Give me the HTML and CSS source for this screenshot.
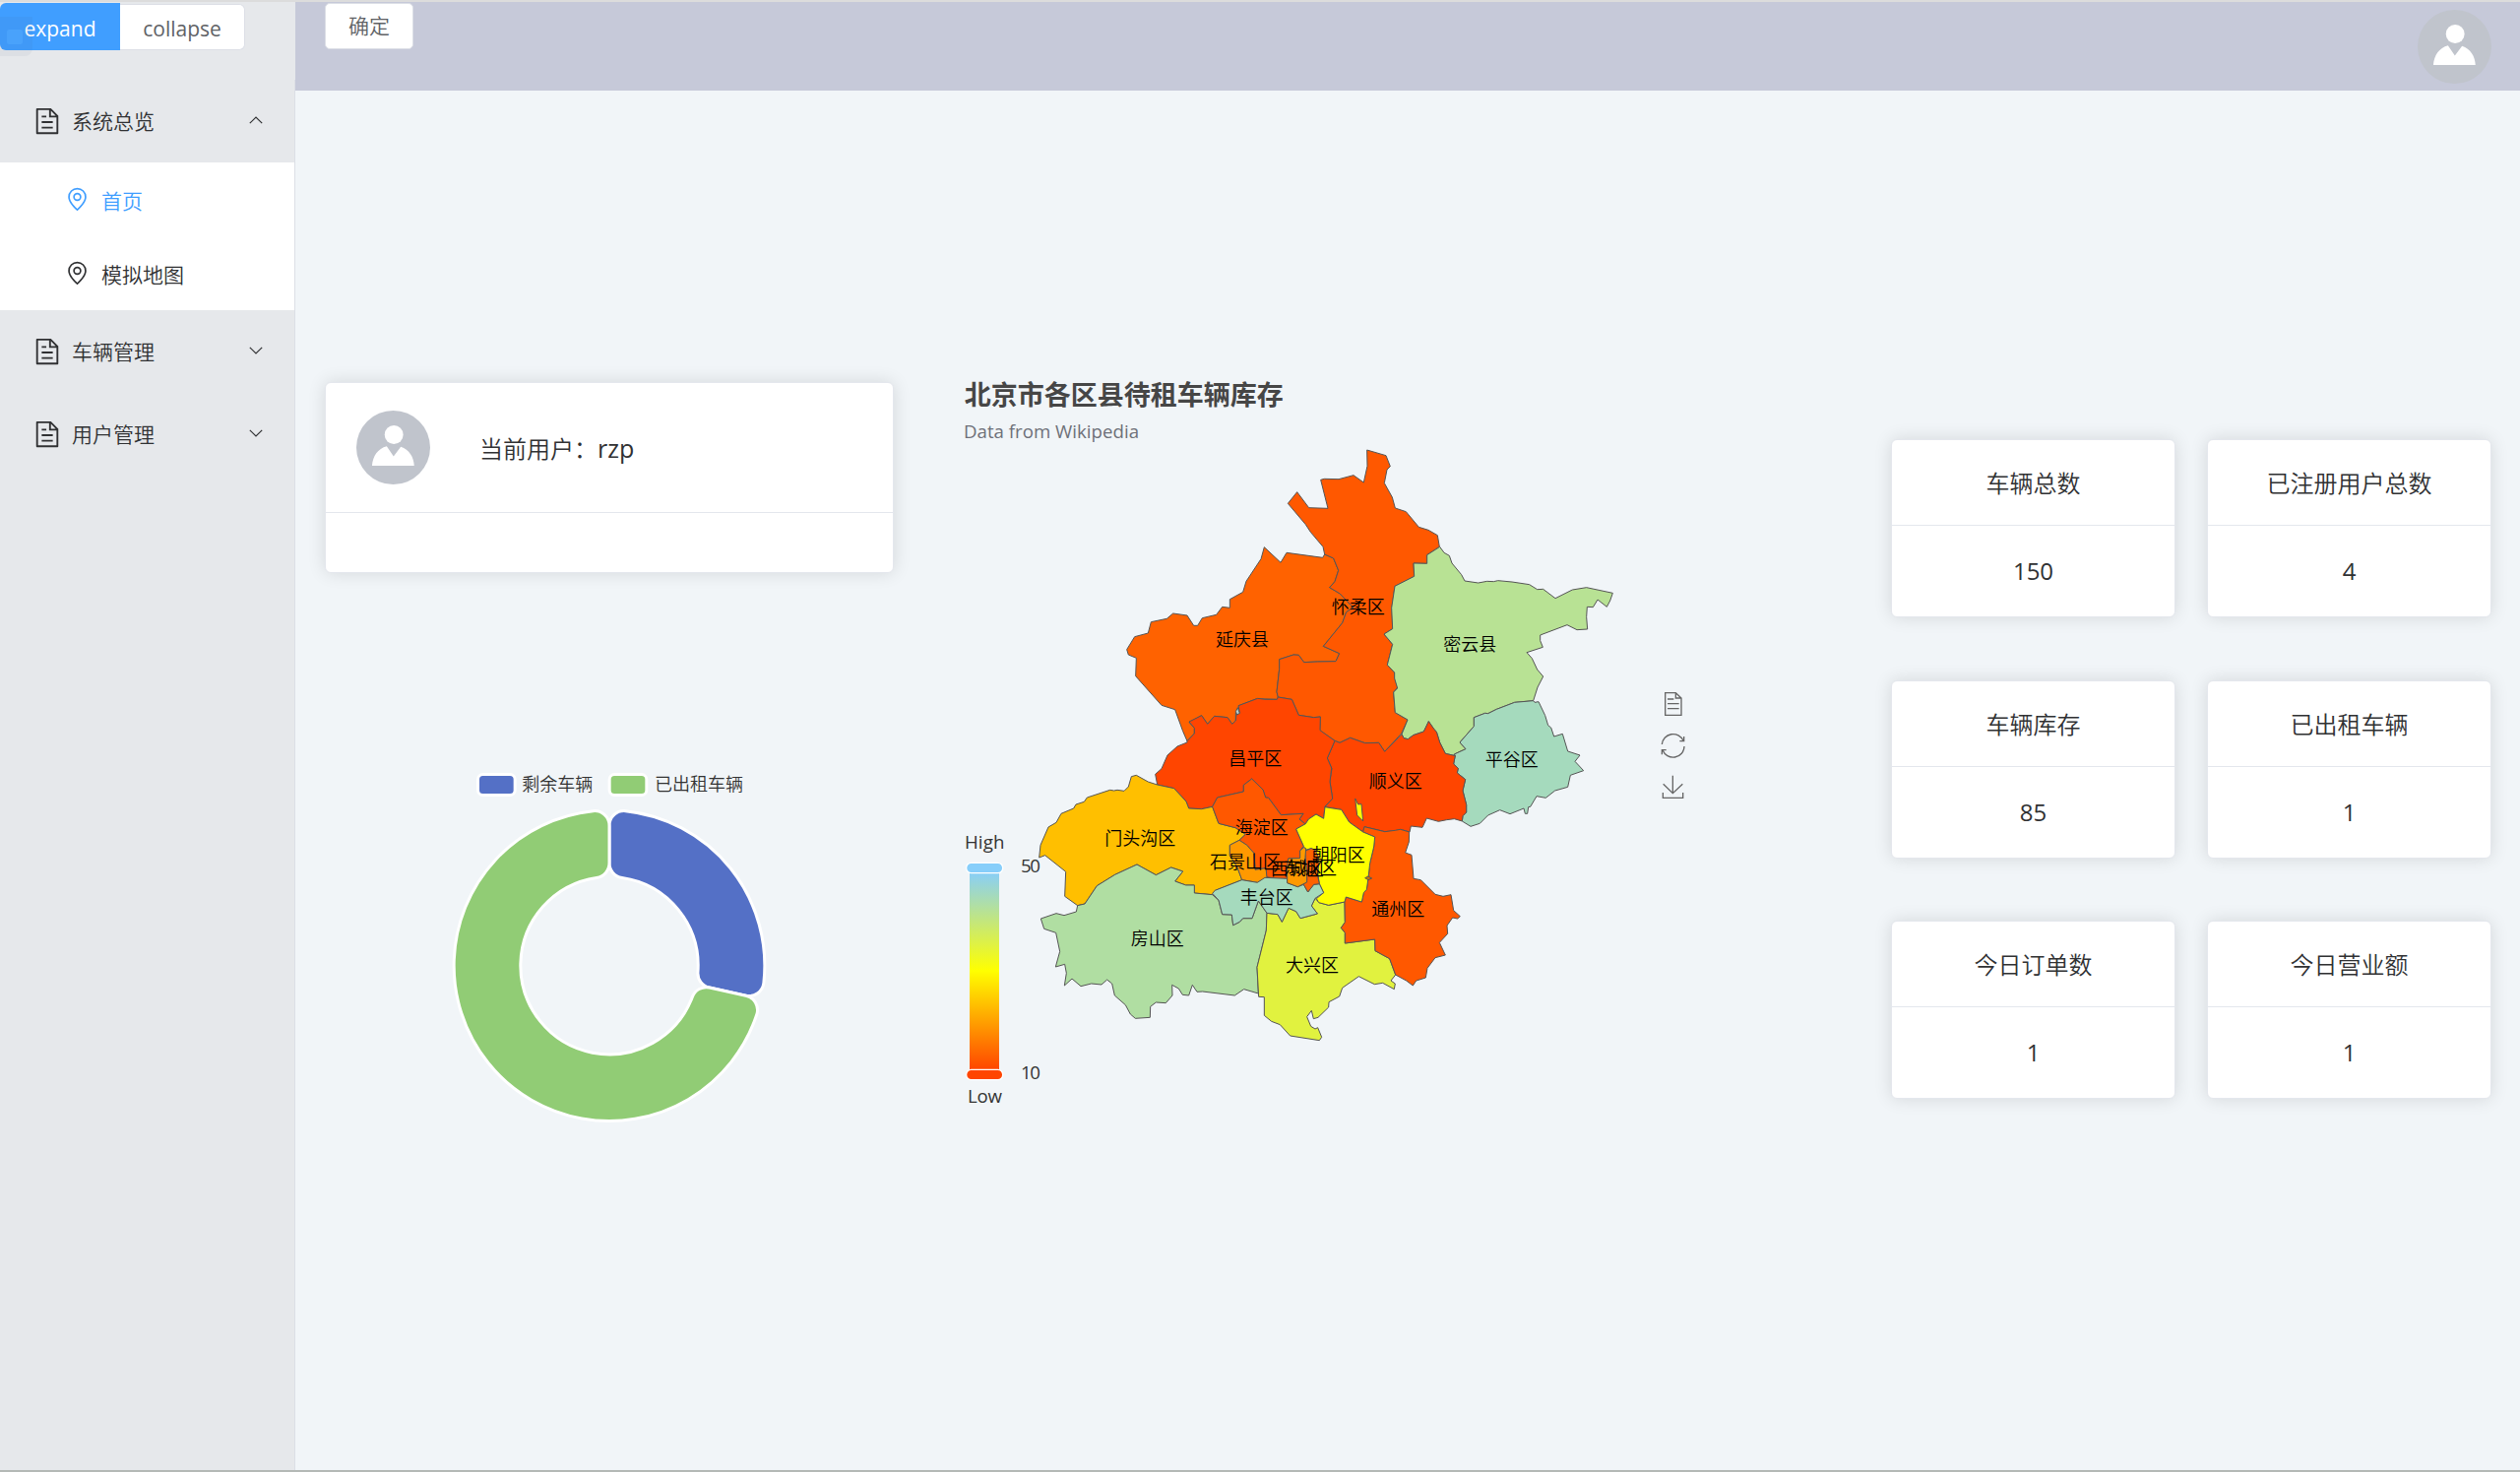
FILE: index.html
```html
<!DOCTYPE html>
<html lang="zh-CN">
<head>
<meta charset="utf-8">
<title>首页</title>
<link rel="stylesheet" href="styles.css">
</head>
<body>
<svg width="0" height="0" class="sprite">
  <symbol id="doc" viewBox="0 0 1024 1024"><path d="M832 384H576V128H192v768h640V384zm-26.496-64L640 154.496V320h165.504zM160 64h480l256 256v608a32 32 0 0 1-32 32H160a32 32 0 0 1-32-32V96a32 32 0 0 1 32-32zm160 448h384v64H320v-64zm0-192h160v64H320v-64zm0 384h384v64H320v-64z"/></symbol>
  <symbol id="pin" viewBox="0 0 1024 1024"><path d="M800 416a288 288 0 1 0-576 0c0 118.144 94.528 272.128 288 456.576C705.472 688.128 800 534.144 800 416zM512 960C277.312 746.688 160 565.312 160 416a352 352 0 0 1 704 0c0 149.312-117.312 330.688-352 544z"/><path d="M512 512a96 96 0 1 0 0-192 96 96 0 0 0 0 192zm0 64a160 160 0 1 1 0-320 160 160 0 0 1 0 320z"/></symbol>
  <symbol id="down" viewBox="0 0 14 8"><path d="M.8 .8 7 7 13.2 .8" fill="none" stroke="currentColor" stroke-width="1.2"/></symbol>
  <symbol id="user" viewBox="0 0 226 226"><circle cx="113" cy="113" r="113" fill="#c0c4cc"/><circle cx="115" cy="74" r="28.5" fill="#fff"/><path d="M48 169C50 139 66 116 93 109L114 140 136 111C162 119 176 143 177 169Z" fill="#fff"/></symbol>
</svg>
<div class="app">
  <aside class="side">
    <div class="switch">
      <button class="sw on">expand</button><button class="sw">collapse</button>
      <span class="grip"><i></i></span>
    </div>
    <nav class="menu">
      <div class="item"><svg class="doc"><use href="#doc"/></svg><span>系统总览</span><svg class="arrow up"><use href="#down"/></svg></div>
      <div class="sub">
        <div class="subitem active"><svg class="pin"><use href="#pin"/></svg><span>首页</span></div>
        <div class="subitem"><svg class="pin"><use href="#pin"/></svg><span>模拟地图</span></div>
      </div>
      <div class="item"><svg class="doc"><use href="#doc"/></svg><span>车辆管理</span><svg class="arrow"><use href="#down"/></svg></div>
      <div class="item"><svg class="doc"><use href="#doc"/></svg><span>用户管理</span><svg class="arrow"><use href="#down"/></svg></div>
    </nav>
  </aside>
  <div class="body">
    <header class="top">
      <button class="ok">确定</button>
      <svg class="avatar"><use href="#user"/></svg>
    </header>
    <main class="main">
      <section class="left">
        <div class="card user">
          <div class="user-head"><svg class="avatar"><use href="#user"/></svg><span>当前用户：<b>rzp</b></span></div>
          <div class="user-body"></div>
        </div>
        <svg class="donut" viewBox="0 0 1080 1140">
          <g stroke="#fff" stroke-width="9">
            <rect x="136.5" y="49.5" width="113" height="63" rx="15" fill="#5470c6"/>
            <rect x="537.5" y="49.5" width="113" height="63" rx="15" fill="#91cc75"/>
            <path fill="#5470c6" d="M537 205.9A45 45 0 0 1 586.7 161.1A473.5 473.5 0 0 1 1007.6 684.5A45 45 0 0 1 953.2 723.5L842 699.1A45 45 0 0 1 806.8 651.8A270.5 270.5 0 0 0 575.6 364.3A45 45 0 0 1 537 319.7Z"/>
            <path fill="#91cc75" d="M953.2 723.5A45 45 0 0 1 986.2 781.7A473.5 473.5 0 1 1 487.3 161.1A45 45 0 0 1 537 205.9L537 319.7A45 45 0 0 1 498.4 364.3A270.5 270.5 0 1 0 790.2 727.2A45 45 0 0 1 842 699.1Z"/>
          </g>
          <g class="legend"><text x="271" y="98">剩余车辆</text><text x="675" y="98">已出租车辆</text></g>
        </svg>
      </section>
      <svg class="map" viewBox="-420 -210 2400 2340">
        <defs><linearGradient id="heat" x1="0" y1="0" x2="0" y2="1"><stop offset="0" stop-color="#87cefa"/><stop offset=".5" stop-color="#ff0"/><stop offset="1" stop-color="#ff4500"/></linearGradient></defs>
        <text class="title" x="-361" y="-86">北京市各区县待租车辆库存</text>
        <text class="subtitle" x="-363" y="16" textLength="534">Data from Wikipedia</text>
        <g class="area">
          <path fill="#ff6200" d="M553 347 603 394 621 364 731 379 737 369 764 381 779 418 768 452 752 470 784 489 815 522 826 530 803 545 791 578 733 649 782 671 771 695 715 696 674 698 658 676 642 675 599 689 599 718 591 788 595 804 592 811 530 809 476 830 474 845 479 853 466 852 466 876 455 886 441 866 401 862 380 886 362 860 324 881 340 898 340 915 318 938 305 908 281 842 240 829 161 740 163 685 139 675 134 659 158 620 199 609 208 575 256 565 275 549 318 555 338 586 350 586 364 563 407 553 425 529 448 532 448 506 488 484 498 451 543 383Z"/>
          <path fill="#ff5800" d="M866 51 924 68 937 101 927 111 919 152 943 195 952 228 985 239 1024 286 1053 295 1081 311 1087 346 1049 371 1049 397 1008 396 1010 436 951 466 942 530 944 596 918 612 944 643 928 706 950 729 951 747 959 774 947 789 952 851 990 873 971 915 920 970 902 943 860 944 815 928 783 943 768 937 722 906 724 864 704 866 658 859 637 811 595 804 591 788 599 718 599 689 642 675 658 676 674 698 715 696 771 695 782 671 733 649 791 578 803 545 826 530 815 522 784 489 752 470 768 452 779 418 764 381 737 369 732 346 694 301 679 278 625 214 653 179 689 227 747 229 725 142 736 139 780 140 825 128 856 150 867 100Z"/>
          <g transform="translate(840 240)">
            <path fill="#b8e294" d="M248 106 261 124 277 133 285 156 314 191 324 210 365 216 392 211 412 212 425 209 468 213 521 221 545 236 563 235 600 263 652 237 695 230 775 247 767 270 757 289 729 267 715 290 697 289 695 320 698 357 666 359 636 344 554 375 554 392 562 412 513 428 529 446 545 480 563 501 546 534 533 575 476 580 421 601 395 614 386 613 352 626 352 653 309 702 327 722 292 738 291 742 265 736 248 702 238 670 230 661 214 638 199 669 167 680 151 692 138 689 132 677 150 633 112 611 107 549 119 537 110 507 110 489 88 466 104 403 78 372 104 356 101 292 111 226 170 196 168 156 209 157 209 131Z"/>
            <path fill="#a5dabd" d="M533 575 537 580 549 578 569 620 578 650 587 657 596 684 622 676 638 729 675 741 660 760 686 788 646 802 638 838 599 849 571 871 543 866 524 898 518 899 515 919 508 919 504 903 462 920 431 908 395 924 370 949 342 958 316 942 318 926 329 915 329 892 318 849 326 815 301 795 304 781 290 768 295 742 292 738 327 722 309 702 352 653 352 626 386 613 395 614 421 601 476 580Z"/>
            <path fill="#ff4500" d="M132 677 138 689 151 692 167 680 199 669 214 638 230 661 238 670 248 702 265 736 291 742 295 742 290 768 304 781 301 795 326 815 318 849 329 892 329 915 318 926 316 942 292 935 269 938 244 943 208 933 195 961 160 957 156 975 129 967 111 971 81 974 18 959 14 975 -28 945 -52 907 -102 899 -79 873 -87 820 -81 782 -95 750 -72 697 -57 703 -25 688 20 704 62 703 80 730Z"/>
          </g>
          <g transform="translate(-180 720)">
            <path fill="#ff4500" d="M498 218 520 195 520 178 504 159 542 140 560 166 581 142 621 146 635 166 646 156 648 131 658 133 654 110 713 88 735 91 772 91 775 84 817 91 838 139 884 146 904 144 903 185 948 217 925 270 938 300 933 342 941 393 918 417 914 454 891 441 868 456 858 471 840 456 852 439 784 443 746 391 737 390 729 366 695 333 670 352 670 372 590 390 575 418 542 425 503 423 495 402 458 362 407 351 401 319 420 302 438 261 468 234 498 222Z"/>
            <path fill="#b8cfcb" d="M652 116 658 133 650 138 646 128Z"/>
            <path fill="#ffbf00" d="M343 322 379 342 407 351 458 362 495 402 503 423 542 425 575 418 594 469 645 482 676 502 657 520 628 535 628 567 650 600 665 641 583 673 575 686 520 681 520 657 494 657 461 645 485 615 449 603 403 626 345 594 278 625 223 659 186 714 164 719 125 691 128 616 65 566 47 573 51 535 75 480 99 466 114 439 152 423 159 411 184 403 193 390 263 367 275 369 285 367 306 370 319 357 328 326Z"/>
            <path fill="#b0dea2" d="M345 594 403 626 449 603 485 615 461 645 494 657 520 657 520 681 575 686 594 703 605 746 634 747 638 779 658 769 668 758 696 758 715 705 741 742 739 795 711 907 715 987 671 974 643 993 545 981 528 982 514 961 503 993 484 991 472 972 452 961 453 993 433 1016 403 1014 386 1027 385 1060 340 1063 325 1050 310 1022 277 993 269 957 254 945 237 960 206 957 174 965 147 942 124 963 130 925 125 898 97 906 110 859 98 802 62 790 52 759 99 743 123 749 160 738 164 719 186 714 223 659 278 625Z"/>
            <path fill="#ff5800" d="M575 418 590 390 670 372 670 352 695 333 729 366 737 390 746 391 784 443 852 439 840 456 858 471 830 486 853 538 842 552 842 575 806 576 803 637 770 637 740 632 738 605 705 610 702 560 680 535 657 520 676 502 645 482 594 469Z"/>
            <path fill="#ff9900" d="M657 520 680 535 702 560 705 610 738 605 741 634 712 649 665 641 650 600 628 567 628 535Z"/>
          </g>
          <g transform="translate(390 960)">
            <path fill="#e1f23f" d="M171 502 204 506 217 529 237 487 260 497 273 518 325 504 307 480 318 457 330 470 359 478 408 468 409 530 397 547 409 562 409 594 500 582 501 617 545 641 563 690 549 708 562 717 559 734 524 715 499 719 451 695 401 730 392 756 360 773 359 789 327 820 313 824 307 799 293 818 305 847 318 855 326 851 338 880 331 890 242 876 211 842 185 832 163 814 163 758 146 757 141 667 169 555Z"/>
            <path fill="#ff5800" d="M468 239 530 254 562 250 578 247 605 255 604 285 593 318 612 325 618 397 640 401 684 445 708 451 732 446 740 494 760 512 752 519 737 516 720 540 722 565 697 592 715 630 684 638 660 670 655 699 626 708 616 723 596 708 563 690 545 641 501 617 500 582 409 594 409 562 397 547 409 530 408 468 412 453 460 468 466 440 475 430 480 395 485 350 497 300 500 270 464 255Z"/>
            <path fill="#ff0" d="M260 246 289 230 298 216 321 201 344 214 348 179 398 187 422 225 464 255 500 270 497 300 485 350 480 395 475 430 466 440 460 468 412 453 408 468 359 478 329 470 322 458 344 440 331 413 326 380 328 340 318 310 306 305 288 310 283 298ZM440 153 449 171 459 170 464 222 446 204Z"/>
            <path fill="#c87800" d="M470 395 480 390 491 396 480 401Z"/>
          </g>
          <g transform="translate(-180 720)">
            <path fill="#a5dabd" d="M575 682 583 673 665 641 712 649 735 634 803 637 803 650 835 662 853 655 866 678 884 655 901 653 914 680 888 697 877 720 895 744 843 758 830 737 807 727 787 769 774 746 741 742 715 705 696 758 668 758 658 769 638 779 634 747 605 746 594 703Z"/>
            <path fill="#ff6200" d="M857 553 876 545 888 550 898 570 900 590 895 625 901 653 884 655 866 678 853 655 863 640Z"/>
            <path fill="#ff9900" d="M853 542 860 545 857 585 863 605 863 648 835 662 803 650 803 600 806 576 842 575 842 552Z"/>
          </g>
        </g>
        <g class="names">
          <text x="486" y="647">延庆县</text><text x="839" y="548">怀柔区</text><text x="1180" y="662">密云县</text><text x="1307" y="1015">平谷区</text><text x="953" y="1081">顺义区</text><text x="526" y="1010">昌平区</text><text x="545" y="1220">海淀区</text><text x="175" y="1255">门头沟区</text><text x="495" y="1325">石景山区</text><text x="653" y="1348">西城区</text><text x="693" y="1344">东城区</text><text x="779" y="1305">朝阳区</text><text x="560" y="1433">丰台区</text><text x="227" y="1561">房山区</text><text x="699" y="1640">大兴区</text><text x="961" y="1470">通州区</text>
        </g>
        <g class="scale" transform="translate(-420 1170)">
          <text x="60" y="96" textLength="121">High</text><text x="69" y="870" textLength="105">Low</text><text x="231" y="167" textLength="60">50</text><text x="231" y="797" textLength="60">10</text>
          <rect x="75" y="165" width="90" height="606" fill="url(#heat)"/>
          <rect x="65" y="139" width="111" height="31" rx="15" fill="#87cefa" stroke="#fff" stroke-width="4"/>
          <rect x="65" y="769" width="111" height="31" rx="15" fill="#ff4500" stroke="#fff" stroke-width="4"/>
        </g>
        <g class="tools" transform="translate(840 240)">
          <path d="M935 551H967L984 567V619H935ZM967 551V567H984M942 570H961M942 584H977M942 599H977"/>
          <path d="M925 708A34 34 0 0 1 990 697M993 714A34 34 0 0 1 927 725M992 684V698H979M925 739V725H938"/>
          <path d="M958 803V857M929 829 958 857 988 829M928 855V871H989V855"/>
        </g>
      </svg>
      <section class="stats">
        <div class="card stat"><h3>车辆总数</h3><p>150</p></div>
        <div class="card stat"><h3>已注册用户总数</h3><p>4</p></div>
        <div class="card stat"><h3>车辆库存</h3><p>85</p></div>
        <div class="card stat"><h3>已出租车辆</h3><p>1</p></div>
        <div class="card stat"><h3>今日订单数</h3><p>1</p></div>
        <div class="card stat"><h3>今日营业额</h3><p>1</p></div>
      </section>
    </main>
  </div>
</div>
</body>
</html>
```
FILE: styles.css
```css
* { box-sizing: border-box; }
body { margin: 0; font-family: "Open Sans", "Noto Sans CJK SC", sans-serif; font-size: 21px; color: #303133; background: #f1f5f8; }
button { font: inherit; }
.sprite { position: absolute; }
.app { display: flex; height: 1495px; border-top: 2px solid #dcdcdc; border-bottom: 2px solid #b4b9b6; }
.side { width: 300px; flex: none; background: #e6e8eb; }
.switch { position: relative; height: 79px; display: flex; align-items: flex-start; padding-top: 1px; }
.sw { height: 47px; width: 127px; margin-top: 1px; padding: 2px 0 0; line-height: 45px; border: 1px solid #dcdfe6; border-left: 0; border-radius: 0 6px 6px 0; background: #fff; color: #606266; }
.sw.on { height: 48px; width: 122px; margin-top: 0; border: 0; border-radius: 6px 0 0 6px; background: #409eff; color: #fff; line-height: 48px; }
.grip { position: absolute; left: 0; top: 15px; width: 33px; height: 40px; border-radius: 0 0 8px 0; background: rgba(60,80,120,.06); padding: 13px 7px; }
.grip i { display: block; width: 16px; height: 15px; border-radius: 2px; background: rgba(80,170,255,.55); }
.menu { height: 1412px; border-right: 1px solid #dcdfe6; }
.item { height: 84px; display: flex; align-items: center; padding: 0 32px 0 33px; }
.item span { margin: -2px 0 0 10px; flex: 1; }
svg { display: block; fill: currentColor; }
.doc { width: 30px; height: 30px; }
.arrow { width: 14px; height: 8px; margin-bottom: 3px; }
.arrow.up { transform: rotate(180deg); }
.sub { height: 150px; background: #fff; }
.subitem { height: 75px; display: flex; align-items: center; padding-left: 65px; }
.subitem span { margin: 0 0 0 11px; }
.active { color: #409eff; }
.pin { width: 27px; height: 27px; }
.body { flex: 1; display: flex; flex-direction: column; }
.top { height: 90px; background: #c6c9d9; display: flex; justify-content: space-between; align-items: flex-start; padding: 1px 29px 0 30px; }
.ok { width: 90px; height: 47px; padding: 0; line-height: 43px; border: 1px solid #dcdfe6; border-radius: 5px; background: #fff; color: #606266; }
.avatar { width: 75px; height: 75px; flex: none; }
.top .avatar { margin-top: 7px; }
.main { flex: 1; display: flex; align-items: flex-start; padding: 278px 29px 0 30px; }
.card { background: #fff; border: 1px solid #e4e7ed; border-radius: 6px; box-shadow: 0 0 18px rgba(0,0,0,.12); }
.left { width: 578px; padding-top: 18px; }
.user { height: 194px; }
.user-head { height: 132px; border-bottom: 1px solid #e4e7ed; display: flex; align-items: center; padding-left: 31px; font-size: 24px; }
.user-head span { margin-left: 50px; }
.user-head b { font-weight: 400; font-size: 25px; }
.donut { width: 360px; height: 380px; margin: 188px 0 0 110px; }
.map { width: 800px; height: 780px; margin-left: 52px; }
.stats { margin: 76px 0 0 161px; width: 610px; display: grid; grid-template-columns: 289px 289px; justify-content: space-between; row-gap: 63.5px; }
.stat { height: 181px; text-align: center; font-size: 24px; }
.stat h3 { margin: 0; height: 87px; line-height: 88px; border-bottom: 1px solid #e4e7ed; font-size: 24px; font-weight: 400; }
.stat p { margin: 0; line-height: 92px; }
.legend { font-size: 54px; fill: #333; }
.title { font-size: 81px; font-weight: 700; fill: #464646; }
.subtitle { font-size: 56px; fill: #6e7079; }
.area path { stroke: #555; stroke-width: 3; stroke-linejoin: round; }
.names { font-size: 54px; fill: #000; text-anchor: middle; }
.scale { font-size: 56px; fill: #333; }
.tools { fill: none; stroke: #666; stroke-width: 4; }
.tools path { fill: none; }
.item span, .subitem span, .user-head span, .stat h3, .names, .legend, .ok { font-weight: 350; }
```
